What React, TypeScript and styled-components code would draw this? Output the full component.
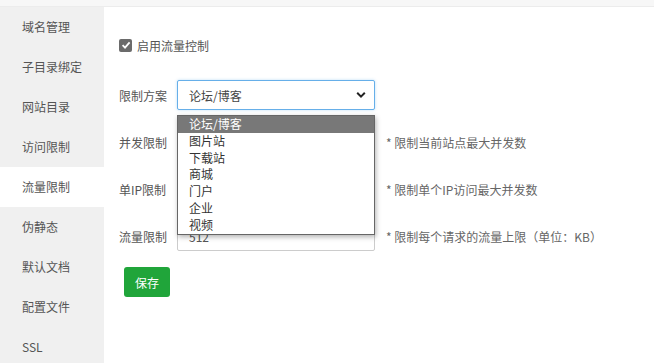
import React from "react";
import styled, { createGlobalStyle } from "styled-components";

const GlobalStyle = createGlobalStyle`
	html, body {
		margin: 0;
		padding: 0;
		background: #fff;
	}
	body {
		font-family: "Noto Sans CJK SC", "Noto Sans", sans-serif;
		font-size: 12px;
		color: #555;
	}
`;

const Page = styled.div`
	display: flex;
	flex-direction: column;
	width: 654px;
	height: 363px;
	overflow: hidden;
`;

const TopStrip = styled.div`
	height: 6px;
	background: #f7f7f7;
	border-bottom: 1px solid #ececec;
	flex-shrink: 0;
`;

const Body = styled.div`
	display: flex;
	flex: 1;
	min-height: 0;
`;

const Sidebar = styled.div`
	width: 104px;
	background: #f0f0f0;
	display: flex;
	flex-direction: column;
	flex-shrink: 0;
`;

const SideItem = styled.div<{ $active?: boolean }>`
	height: 40px;
	line-height: 40px;
	padding-left: 22px;
	color: #555;
	background: ${p => (p.$active ? "#fff" : "transparent")};
`;

const Main = styled.div`
	flex: 1;
	padding: 31px 0 0 15px;
	display: flex;
	flex-direction: column;
`;

const CheckRow = styled.label`
	display: flex;
	align-items: center;
	gap: 5px;
	height: 14px;
	color: #555;
`;

const CheckBox = styled.span`
	width: 13px;
	height: 13px;
	border-radius: 2px;
	background: #6b6b6b;
	display: flex;
	align-items: center;
	justify-content: center;
`;

const Form = styled.div`
	display: flex;
	flex-direction: column;
	gap: 17px;
	margin-top: 28px;
`;

const Row = styled.div`
	display: flex;
	align-items: center;
	height: 30px;
`;

const Label = styled.span`
	width: 58px;
	flex-shrink: 0;
	color: #555;
`;

const Control = styled.div`
	position: relative;
	width: 198px;
	height: 30px;
`;

const SelectBox = styled.div`
	box-sizing: border-box;
	height: 30px;
	border: 1px solid #66afe9;
	border-radius: 2px;
	box-shadow: 0 0 3px rgba(102, 175, 233, 0.45);
	padding: 0 8px 0 11px;
	display: flex;
	align-items: center;
	justify-content: space-between;
	color: #444;
	background: #fff;
`;

const Input = styled.div`
	box-sizing: border-box;
	height: 30px;
	border: 1px solid #ccc;
	border-radius: 2px;
	padding-left: 11px;
	display: flex;
	align-items: center;
	color: #555;
	background: #fff;
`;

const Note = styled.span`
	margin-left: 11px;
	color: #666;
	white-space: nowrap;
`;

const DropList = styled.ul`
	position: absolute;
	top: 35px;
	left: 0;
	width: 198px;
	box-sizing: border-box;
	margin: 0;
	padding: 0;
	list-style: none;
	background: #fff;
	border: 1px solid #666;
	box-shadow: 1px 2px 5px rgba(0, 0, 0, 0.3);
	z-index: 5;
`;

const DropItem = styled.li<{ $selected?: boolean }>`
	height: 16.8px;
	line-height: 16.8px;
	padding-left: 11px;
	font-size: 12px;
	color: ${p => (p.$selected ? "#fff" : "#333")};
	background: ${p => (p.$selected ? "#787878" : "#fff")};
`;

const SaveButton = styled.button`
	margin: 16px 0 0 5px;
	width: 46px;
	height: 30px;
	border: none;
	border-radius: 3px;
	background: #20a53a;
	color: #fff;
	font-family: inherit;
	font-size: 12px;
	align-self: flex-start;
`;

const menu = ["域名管理", "子目录绑定", "网站目录", "访问限制", "流量限制", "伪静态", "默认文档", "配置文件", "SSL"];
const plans = ["论坛/博客", "图片站", "下载站", "商城", "门户", "企业", "视频"];

export default function App() {
	return <Page>
		<GlobalStyle/>
		<TopStrip/>
		<Body>
			<Sidebar>
				{menu.map(m => <SideItem key={m} $active={m === "流量限制"}>{m}</SideItem>)}
			</Sidebar>
			<Main>
				<CheckRow>
					<CheckBox>
						<svg width="10" height="10" viewBox="0 0 10 10">
							<path d="M1.6 5.2 L4 7.6 L8.6 2.4" fill="none" stroke="#fff" strokeWidth="1.8"/>
						</svg>
					</CheckBox>
					启用流量控制
				</CheckRow>
				<Form>
					<Row>
						<Label>限制方案</Label>
						<Control>
							<SelectBox>
								<span>论坛/博客</span>
								<svg width="10" height="8" viewBox="0 0 10 8">
									<path d="M1.2 1.8 L5 5.6 L8.8 1.8" fill="none" stroke="#222" strokeWidth="2"/>
								</svg>
							</SelectBox>
							<DropList>
								{plans.map((p, i) => <DropItem key={p} $selected={i === 0}>{p}</DropItem>)}
							</DropList>
						</Control>
					</Row>
					<Row>
						<Label>并发限制</Label>
						<Control><Input/></Control>
						<Note>* 限制当前站点最大并发数</Note>
					</Row>
					<Row>
						<Label>单IP限制</Label>
						<Control><Input/></Control>
						<Note>* 限制单个IP访问最大并发数</Note>
					</Row>
					<Row>
						<Label>流量限制</Label>
						<Control><Input>512</Input></Control>
						<Note>* 限制每个请求的流量上限（单位：KB）</Note>
					</Row>
				</Form>
				<SaveButton>保存</SaveButton>
			</Main>
		</Body>
	</Page>;
}
